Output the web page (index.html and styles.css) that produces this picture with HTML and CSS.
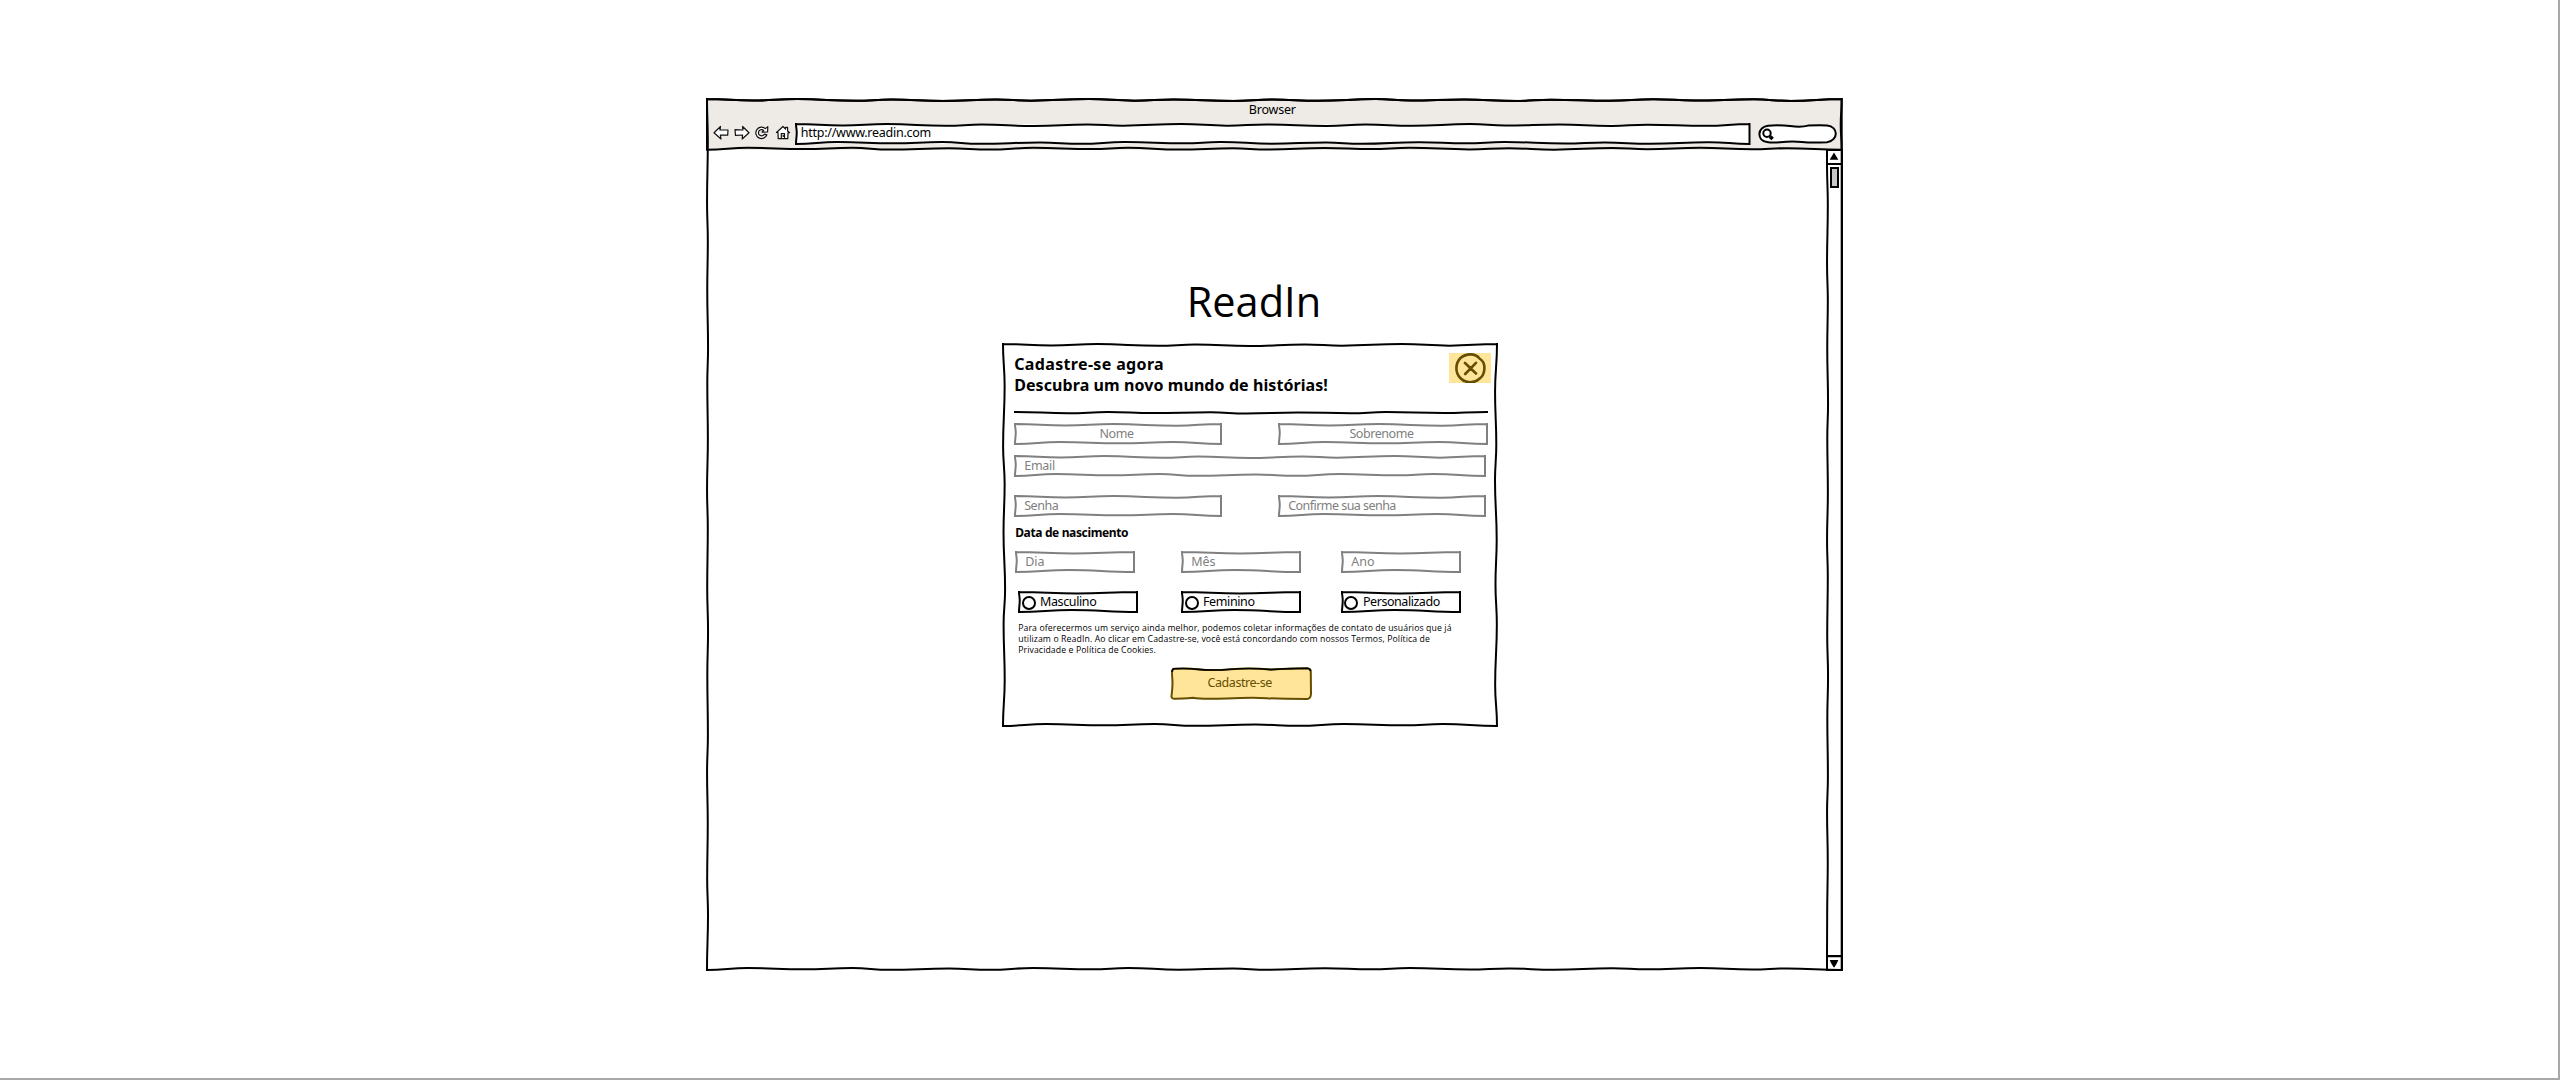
FILE: index.html
```html
<!DOCTYPE html>
<html lang="pt-BR">
<head>
<meta charset="utf-8">
<title>ReadIn</title>
<link rel="stylesheet" href="styles.css">
</head>
<body>
<main class="window sketch" data-left="0.5" data-right="0">
  <header class="chrome sketch" data-left="0" data-right="0.5">
    <div class="chrome-title"><span class="t t-browser">Browser</span></div>
    <div class="toolbar">
      <nav class="nav-icons">
        <svg width="16" height="16" viewBox="0 0 16 16"><path d="M1 7.8 7.5 1.5 7 5 15 5 14.7 10.2 7.3 10 8 14z"/></svg>
        <svg width="16" height="16" viewBox="0 0 16 16"><path d="M15 7.8 8.6 1.5 8.9 5 1 4.7 1.5 10.4 8.6 10 8.2 14z"/></svg>
        <svg width="16" height="16" viewBox="0 0 16 16"><path d="M11.4 3.6A5.7 5.7 0 1 0 12.9 9.8L10.3 9.2A3.1 3.1 0 1 1 9.6 5.4L8 7.1 13.6 7 13.8 1.6z"/></svg>
        <svg width="16" height="16" viewBox="0 0 16 16"><path d="M1.5 7.5 8 1.5 10.6 4V2.4h2V6l2 1.7H13l-.2 6H3.2L3 7.7zM6.3 13.5V8.6h3.2v4.9M8.2 10v2"/></svg>
      </nav>
      <div class="url sketch"><span class="t t-url">http://www.readin.com</span></div>
      <div class="search">
        <svg width="79" height="20" viewBox="0 0 79 20"><path class="pill" d="M10 1.8Q20 .8 32 2.1T50 1.6Q62 .8 69 1.5C75 2 77.8 6 77.8 9.5S75 17.5 69 18.2Q54 19 44 18T22 18.2Q14 19 9 18C4 17.5 1.4 14 1.4 10S5 2.2 10 1.8Z"/><circle class="lens" cx="9" cy="9.2" r="3.7"/><path class="handle" d="M12 12.4 14.6 15"/></svg>
      </div>
    </div>
  </header>
  <div class="viewport">
    <section class="page">
      <h1><span class="t">ReadIn</span></h1>
      <form class="modal sketch">
        <div class="modal-head">
          <h2><span class="t t-h1">Cadastre-se agora</span><br><span class="t t-h2">Descubra um novo mundo de histórias!</span></h2>
          <div class="close"><svg width="42" height="30" viewBox="0 0 42 30"><path d="M21.5 1.4Q27 1.2 30.5 5.5 35.6 8.6 35.4 15.2 35.2 22 31 25.3 27 29.2 21 29.3 15 29 11.3 25 7.3 21 7.4 15 7.5 9 11.5 5 15.5 1.6 21.5 1.4ZM16 10 27 20.5M27 9.8 16.2 21"/></svg></div>
        </div>
        <div class="rule"></div>
        <div class="pair">
          <div class="field centered sketch"><span class="t t-nome">Nome</span></div>
          <div class="field centered wide sketch"><span class="t t-sobre">Sobrenome</span></div>
        </div>
        <div class="field email sketch"><span class="t t-email">Email</span></div>
        <div class="pair passwords">
          <div class="field sketch"><span class="t t-senha">Senha</span></div>
          <div class="field sketch"><span class="t t-conf">Confirme sua senha</span></div>
        </div>
        <h3><span class="t t-data">Data de nascimento</span></h3>
        <div class="trio dates">
          <div class="field sketch"><span class="t">Dia</span></div>
          <div class="field sketch"><span class="t">Mês</span></div>
          <div class="field sketch"><span class="t">Ano</span></div>
        </div>
        <div class="trio genders">
          <label class="radio sketch"><i class="dot"></i><span class="t t-masc">Masculino</span></label>
          <label class="radio sketch"><i class="dot"></i><span class="t t-fem">Feminino</span></label>
          <label class="radio tight sketch"><i class="dot"></i><span class="t t-pers">Personalizado</span></label>
        </div>
        <p class="terms"><span class="t">Para oferecermos um serviço ainda melhor, podemos coletar informações de contato de usuários que já</span><br><span class="t">utilizam o ReadIn. Ao clicar em Cadastre-se, você está concordando com nossos Termos, Política de</span><br><span class="t">Privacidade e Política de Cookies.</span></p>
        <div class="submit"><svg width="140" height="31" viewBox="0 0 140 31"><path class="face" d="M3 .8Q16 0 28 1.4T60 1.2 100 1.6Q120 .4 136 .3 140 .6 139.8 4L140 26Q139.5 31 136 31 110 31 96 30.2T56 30.4 22 29.8Q10 30.8 3 30.7 0 30.5.6 27 2 17 1.2 9 .4 1.6 3 .8Z"/><path class="shade" d="M1 4Q1 1 3 .8 16 0 28 1.4T60 1.2 100 1.6Q120 .4 136 .3 139 .5 139.6 3"/></svg><span class="t t-cad">Cadastre-se</span></div>
      </form>
    </section>
    <aside class="scrollbar">
      <div class="arrow sketch"><svg width="10" height="9" viewBox="0 0 10 9"><path d="M5 .5 9.3 7.7H.7z"/></svg></div>
      <div class="track sketch" data-left="0.5" data-right="0"><div class="thumb"></div></div>
      <div class="arrow sketch"><svg width="10" height="9" viewBox="0 0 10 9"><path d="M.7 1H9.3L8 4 5.5 8.3H4.6L2 4z"/></svg></div>
    </aside>
  </div>
</main>
<script src="sketch.js"></script>
</body>
</html>
```
FILE: styles.css
```css
* { box-sizing: border-box; margin: 0; padding: 0; }
body {
  width: 2560px; height: 1080px; overflow: hidden; background: #fff; color: #000;
  border-right: 2px solid #a8a8a8; border-bottom: 2px solid #a8a8a8;
  padding: 99px 0 0 707.3px; display: flex; align-items: flex-start;
  font: 12.5px/19px "Noto Sans", "Open Sans", sans-serif;
}
.t { white-space: nowrap; display: inline-block; }
.sketch { position: relative; }
.outline { position: absolute; left: 0; top: 0; overflow: visible; pointer-events: none; fill: none; stroke: currentColor; stroke-width: 2; }

.window { width: 1134.7px; height: 871px; flex: none; display: flex; flex-direction: column; }
.chrome { height: 50.8px; background: #eeebe6; }
.chrome-title { height: 23.5px; padding: 0 0 0 541.5px; line-height: 21.6px; }
.t-browser { letter-spacing: -0.2px; }
.toolbar { display: flex; align-items: flex-start; }
.nav-icons { display: flex; gap: 4.8px; width: 88.5px; padding: 2px 0 0 5.5px; }
.nav-icons svg { flex: none; fill: #fff; stroke: #111; stroke-width: 1.2; stroke-linejoin: round; }
.url { width: 953.5px; height: 20px; margin-top: 1px; padding-left: 5px; background: #fff; line-height: 18px; }
.t-url { letter-spacing: -0.26px; }
.search { margin: 1.5px 0 0 9px; }
.search svg { display: block; }
.pill { fill: #fff; stroke: #000; stroke-width: 2; }
.lens { fill: none; stroke: #000; stroke-width: 2; }
.handle { stroke: #000; stroke-width: 3.6; }

.viewport { flex: 1; display: flex; }
.page { flex: 1; padding: 126px 0 0 295.4px; }
h1 { font: 400 41.5px/50px "Open Sans", "Noto Sans", sans-serif; padding-left: 184px; height: 50px; margin-bottom: 18.2px; }
h1 .t { padding-top: 0.7px; height: 50px; }
.modal { width: 494px; height: 382px; padding: 9.5px 0 0 12px; }
.modal-head { display: flex; height: 58.8px; justify-content: space-between; padding-right: 6px; }
h2 { font-size: 16px; line-height: 21px; margin-left: -0.5px; padding-top: 0.3px; }
.t-h1 { letter-spacing: 0.35px; }
.t-h2 { letter-spacing: 0.08px; }
.close { width: 42px; height: 30px; background: #ffe599; }
.close svg { display: block; fill: none; stroke: #664e00; stroke-width: 2.6; stroke-linecap: round; }
.rule { width: 471.5px; height: 2px; margin: 0 0 9.7px; position: relative; color: #000; }
.field { width: 206px; height: 20px; padding-left: 9.5px; color: #808080; }
.field.centered { padding: 0 2.4px 0 0; text-align: center; }
.field.wide { width: 208px; }
.t-nome, .t-sobre, .t-senha, .t-cad, .t-pers { letter-spacing: -0.45px; }
.t-email { letter-spacing: -0.25px; }
.t-conf { letter-spacing: -0.54px; }
.t-masc, .t-fem { letter-spacing: -0.38px; }
.t-data { letter-spacing: -0.36px; }
.pair { display: flex; gap: 58px; }
.email { width: 470px; margin-top: 12px; }
.passwords { margin-top: 20px; }
h3 { font-size: 12px; line-height: 18px; height: 18px; margin-top: 8.5px; padding-left: 0.5px; }
.trio { display: flex; }
.trio > * { width: 118px; height: 20px; flex: none; }
.trio > :nth-child(2) { margin-left: 48px; }
.trio > :nth-child(3) { margin-left: 42px; }
.dates { margin: 9.5px 0 0 1px; }
.genders { margin: 20px 0 0 4px; }
.genders > :nth-child(2) { margin-left: 45px; }
.radio { display: flex; padding-left: 3.5px; gap: 3.8px; }
.radio.tight { padding-left: 2.5px; gap: 4.8px; }
.dot { width: 14px; height: 14px; margin-top: 4px; border: 2px solid #000; border-radius: 50%; }
.terms { margin: 11.5px 0 0 3.5px; font: 8.7px/11px "Open Sans", "Noto Sans", sans-serif; letter-spacing: 0.11px; }
.submit { display: grid; width: 140px; height: 31px; margin: 12px 0 0 156px; line-height: 30px; color: #664e00; }
.submit > * { grid-area: 1 / 1; }
.submit svg { overflow: visible; }
.submit .t { justify-self: center; margin-right: 2px; }
.face { fill: #ffe599; stroke: #664e00; stroke-width: 2; }
.shade { fill: none; stroke: #000; stroke-width: 1.6; }

.scrollbar { width: 15px; display: flex; flex-direction: column; }
.arrow { height: 14px; display: grid; place-items: center; }
.track { flex: 1; padding: 3px 0 0 3px; }
.thumb { width: 9px; height: 21px; background: #c6c6c6; border: 2px solid #000; }
```
FILE: sketch.js
```js
// Draws hand-drawn looking outlines round every .sketch box.
// data-left / data-right scale how much that side bends.
function wave(len, seed) {
  if (len < 18) return [[0, 0], [len, 0]];
  const n = Math.max(2, Math.round(len / 48));
  const depth = len < 30 ? 0.9 : 1.8;
  const pts = [[0, 0]];
  for (let i = 1; i < n; i++) {
    const off = i % 2 ? depth : 0.4;
    pts.push([len * i / n + Math.sin(seed + i * 2.3) * Math.min(7, len / n / 5), off + Math.sin(seed * 3 + i) * 0.3]);
  }
  pts.push([len, 0]);
  return pts;
}
function curve(pts) {
  let d = "M" + pts[0].map(v => v.toFixed(2)).join(" ");
  for (let i = 1; i < pts.length; i++) {
    const a = pts[i - 1], b = pts[i];
    const dx = (b[0] - a[0]) * 0.45, dy = (b[1] - a[1]) * 0.45;
    const vertical = Math.abs(dy) > Math.abs(dx);
    const c1 = vertical ? [a[0], a[1] + dy] : [a[0] + dx, a[1]];
    const c2 = vertical ? [b[0], b[1] - dy] : [b[0] - dx, b[1]];
    d += "C" + [...c1, ...c2, ...b].map(v => v.toFixed(2)).join(" ");
  }
  return d;
}
function addOutline(el, d) {
  const svg = document.createElementNS("http://www.w3.org/2000/svg", "svg");
  svg.setAttribute("class", "outline");
  svg.setAttribute("width", el.offsetWidth);
  svg.setAttribute("height", el.offsetHeight);
  const p = document.createElementNS("http://www.w3.org/2000/svg", "path");
  p.setAttribute("d", d);
  p.setAttribute("stroke-linecap", "square");
  svg.appendChild(p);
  el.appendChild(svg);
}
document.querySelectorAll(".sketch").forEach(el => {
  const { width: w, height: h } = el.getBoundingClientRect();
  const bendLeft = Number(el.dataset.left ?? 1);
  const bendRight = h < 30 ? 0 : Number(el.dataset.right ?? 1);
  const top = wave(w, 1), bottom = wave(w, 2).map(([x, y]) => [x, h - y]);
  const left = wave(h, 3).map(([x, y]) => [y * bendLeft, x]);
  const right = wave(h, 4).map(([x, y]) => [w - y * bendRight, x]);
  addOutline(el, curve(top) + curve(left) + curve(bottom) + curve(right));
});
document.querySelectorAll(".rule").forEach(el => {
  addOutline(el, curve(wave(el.offsetWidth, 5).map(([x, y]) => [x, y * 0.7])));
});
```
